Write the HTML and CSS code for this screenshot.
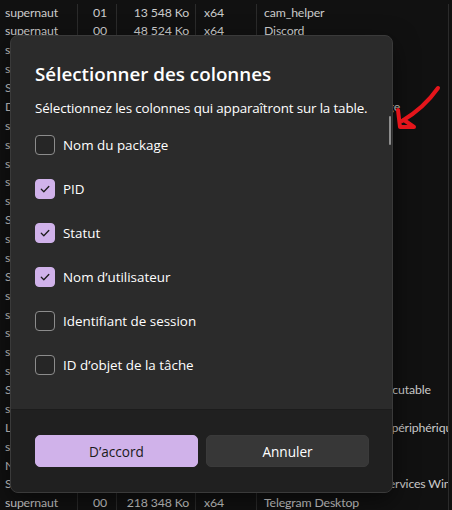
FILE: index.html
```html
<!DOCTYPE html>
<html lang="fr">

<head>
    <meta charset="UTF-8">
    <title>Gestionnaire des tâches</title>
    <link rel="stylesheet" href="styles.css">
</head>

<body>
    <div class="process-table">
        <div class="row"><span class="c-user">supernaut</span><span class="c-sess">01</span><span class="c-mem">13 548 Ko</span><span class="c-arch">x64</span><span class="c-desc">cam_helper</span><span class="c-end"></span></div>
        <div class="row"><span class="c-user">supernaut</span><span class="c-sess">00</span><span class="c-mem">48 524 Ko</span><span class="c-arch">x64</span><span class="c-desc">Discord</span><span class="c-end"></span></div>
        <div class="row"><span class="c-user">supernaut</span><span class="c-sess">01</span><span class="c-mem">2 104 Ko</span><span class="c-arch">x64</span><span class="c-desc">Discord</span><span class="c-end"></span></div>
        <div class="row"><span class="c-user">supernaut</span><span class="c-sess">01</span><span class="c-mem">9 880 Ko</span><span class="c-arch">x64</span><span class="c-desc">Discord</span><span class="c-end"></span></div>
        <div class="row"><span class="c-user">SYSTEM</span><span class="c-sess">00</span><span class="c-mem">1 420 Ko</span><span class="c-arch">x64</span><span class="c-desc">Processus hôte</span><span class="c-end"></span></div>
        <div class="row"><span class="c-user">DWM-1</span><span class="c-sess">01</span><span class="c-mem">72 316 Ko</span><span class="c-arch">x64</span><span class="c-desc">Gestionnaire de fenêtrage</span><span class="c-end"></span></div>
        <div class="row"><span class="c-user">supernaut</span><span class="c-sess">01</span><span class="c-mem">31 772 Ko</span><span class="c-arch">x64</span><span class="c-desc">Explorateur</span><span class="c-end"></span></div>
        <div class="row"><span class="c-user">supernaut</span><span class="c-sess">01</span><span class="c-mem">6 012 Ko</span><span class="c-arch">x64</span><span class="c-desc">Firefox</span><span class="c-end"></span></div>
        <div class="row"><span class="c-user">supernaut</span><span class="c-sess">01</span><span class="c-mem">8 264 Ko</span><span class="c-arch">x64</span><span class="c-desc">Firefox</span><span class="c-end"></span></div>
        <div class="row"><span class="c-user">supernaut</span><span class="c-sess">01</span><span class="c-mem">4 544 Ko</span><span class="c-arch">x64</span><span class="c-desc">Firefox</span><span class="c-end"></span></div>
        <div class="row"><span class="c-user">supernaut</span><span class="c-sess">01</span><span class="c-mem">3 176 Ko</span><span class="c-arch">x64</span><span class="c-desc">Firefox</span><span class="c-end"></span></div>
        <div class="row"><span class="c-user">SYSTEM</span><span class="c-sess">00</span><span class="c-mem">1 032 Ko</span><span class="c-arch">x64</span><span class="c-desc">Processus hôte</span><span class="c-end"></span></div>
        <div class="row"><span class="c-user">supernaut</span><span class="c-sess">01</span><span class="c-mem">12 440 Ko</span><span class="c-arch">x64</span><span class="c-desc">Firefox</span><span class="c-end"></span></div>
        <div class="row"><span class="c-user">supernaut</span><span class="c-sess">01</span><span class="c-mem">5 908 Ko</span><span class="c-arch">x64</span><span class="c-desc">Firefox</span><span class="c-end"></span></div>
        <div class="row"><span class="c-user">SYSTEM</span><span class="c-sess">00</span><span class="c-mem">2 760 Ko</span><span class="c-arch">x64</span><span class="c-desc">Processus hôte</span><span class="c-end"></span></div>
        <div class="row"><span class="c-user">supernaut</span><span class="c-sess">01</span><span class="c-mem">7 212 Ko</span><span class="c-arch">x64</span><span class="c-desc">Firefox</span><span class="c-end"></span></div>
        <div class="row"><span class="c-user">supernaut</span><span class="c-sess">01</span><span class="c-mem">2 884 Ko</span><span class="c-arch">x64</span><span class="c-desc">Firefox</span><span class="c-end"></span></div>
        <div class="row"><span class="c-user">supernaut</span><span class="c-sess">01</span><span class="c-mem">19 336 Ko</span><span class="c-arch">x64</span><span class="c-desc">Firefox</span><span class="c-end"></span></div>
        <div class="row"><span class="c-user">supernaut</span><span class="c-sess">01</span><span class="c-mem">1 656 Ko</span><span class="c-arch">x64</span><span class="c-desc">Firefox</span><span class="c-end"></span></div>
        <div class="row"><span class="c-user">supernaut</span><span class="c-sess">01</span><span class="c-mem">3 448 Ko</span><span class="c-arch">x64</span><span class="c-desc">Firefox</span><span class="c-end"></span></div>
        <div class="row"><span class="c-user">SYSTEM</span><span class="c-sess">00</span><span class="c-mem">6 196 Ko</span><span class="c-arch">x64</span><span class="c-desc">Service Antimalware exécutable</span><span class="c-end"></span></div>
        <div class="row"><span class="c-user">supernaut</span><span class="c-sess">01</span><span class="c-mem">2 028 Ko</span><span class="c-arch">x64</span><span class="c-desc">Firefox</span><span class="c-end"></span></div>
        <div class="row"><span class="c-user">LOCAL SERVICE</span><span class="c-sess">00</span><span class="c-mem">1 912 Ko</span><span class="c-arch">x64</span><span class="c-desc">Hôte de l’association de périphérique</span><span class="c-end"></span></div>
        <div class="row"><span class="c-user">supernaut</span><span class="c-sess">01</span><span class="c-mem">4 120 Ko</span><span class="c-arch">x64</span><span class="c-desc">Firefox</span><span class="c-end"></span></div>
        <div class="row"><span class="c-user">NETWORK SERVICE</span><span class="c-sess">00</span><span class="c-mem">3 064 Ko</span><span class="c-arch">x64</span><span class="c-desc">Hôte de service</span><span class="c-end"></span></div>
        <div class="row"><span class="c-user">SYSTEM</span><span class="c-sess">00</span><span class="c-mem">1 288 Ko</span><span class="c-arch">x64</span><span class="c-desc">Processus de l’hôte de services Windows</span><span class="c-end"></span></div>
        <div class="row"><span class="c-user">supernaut</span><span class="c-sess">00</span><span class="c-mem">218 348 Ko</span><span class="c-arch">x64</span><span class="c-desc">Telegram Desktop</span><span class="c-end"></span></div>
    </div>

    <div class="dialog">
        <div class="dialog-body">
            <h1 class="dialog-title">Sélectionner des colonnes</h1>
            <p class="dialog-text">Sélectionnez les colonnes qui apparaîtront sur la table.</p>
            <div class="column-list">
                <label class="check-row"><span class="box"></span>Nom du package</label>
                <label class="check-row"><span class="box checked"><svg viewBox="0 0 12 12" width="12" height="12"><path d="M2.3 6.3 L4.8 8.7 L9.8 3.5" /></svg></span>PID</label>
                <label class="check-row"><span class="box checked"><svg viewBox="0 0 12 12" width="12" height="12"><path d="M2.3 6.3 L4.8 8.7 L9.8 3.5" /></svg></span>Statut</label>
                <label class="check-row"><span class="box checked"><svg viewBox="0 0 12 12" width="12" height="12"><path d="M2.3 6.3 L4.8 8.7 L9.8 3.5" /></svg></span>Nom d’utilisateur</label>
                <label class="check-row"><span class="box"></span>Identifiant de session</label>
                <label class="check-row"><span class="box"></span>ID d’objet de la tâche</label>
            </div>
            <span class="scroll-thumb"></span>
        </div>
        <div class="dialog-footer">
            <button class="btn btn-primary">D’accord</button>
            <button class="btn">Annuler</button>
        </div>
    </div>

    <svg class="annotation" width="452" height="510" viewBox="0 0 452 510">
        <path d="M438 88 Q424 108 402 121" />
        <path d="M398 110 L400 127 L414 127 L404 120" />
    </svg>
</body>

</html>
```

FILE: styles.css
```css
html,
body {
    margin: 0;
    padding: 0;
    background-color: #111111;
    font-family: "Open Sans", "Noto Sans", sans-serif;
    color: #fff;
}

* {
    box-sizing: border-box;
}

/* BACKGROUND PROCESS TABLE */
.process-table {
    padding-top: 3.5px;
    font-family: "Lato", "Open Sans", sans-serif;
    font-size: 12.3px;
    letter-spacing: -0.15px;
    color: #cbcbcb;
    width: 452px;
    height: 510px;
    overflow: hidden;
}

.row {
    display: grid;
    grid-template-columns: 78px 39px 79px 61px 192px 3px;
    height: 18.88px;
    line-height: 18.88px;
    white-space: nowrap;
}

.row span {
    overflow: hidden;
    border-right: 1px solid #2b2b2b;
}

.c-user {
    padding-left: 5px;
}

.c-sess {
    text-align: right;
    padding-right: 9px;
}

.c-mem {
    text-align: right;
    padding-right: 6px;
}

.c-arch {
    padding-left: 8px;
}

.c-desc {
    padding-left: 7px;
}

.row .c-end {
    border-right: none;
}

/* DIALOG */
.dialog {
    position: absolute;
    left: 10px;
    top: 35px;
    width: 383px;
    height: 458px;
    display: flex;
    flex-direction: column;
    background-color: #2b2b2b;
    border: 1px solid #3a3a3a;
    border-radius: 8px;
    overflow: hidden;
    box-shadow: 0 8px 24px rgba(0, 0, 0, 0.5);
}

.dialog-body {
    position: relative;
    flex: 1;
    padding: 24px 24px 0 24px;
}

.dialog-title {
    margin: 0;
    font-size: 18.8px;
    font-weight: 600;
    line-height: 28px;
}

.dialog-text {
    margin: 10px 0 0 0;
    font-size: 13.4px;
    line-height: 20px;
    letter-spacing: -0.15px;
    white-space: nowrap;
}

.column-list {
    margin-top: 5px;
    height: 264px;
    overflow: hidden;
}

.check-row {
    display: flex;
    align-items: center;
    gap: 8px;
    height: 44px;
    font-size: 13.4px;
}

.box {
    display: flex;
    align-items: center;
    justify-content: center;
    width: 20px;
    height: 20px;
    border: 1px solid #8c8c8c;
    border-radius: 4px;
    background-color: #262626;
}

.box.checked {
    border-color: #d0b2ea;
    background-color: #d0b2ea;
}

.box svg path {
    fill: none;
    stroke: #1c1c1c;
    stroke-width: 1.3;
    stroke-linecap: round;
    stroke-linejoin: round;
}

.scroll-thumb {
    position: absolute;
    left: 378px;
    top: 80px;
    width: 2px;
    height: 29px;
    border-radius: 1px;
    background-color: #8e8e8e;
}

.dialog-footer {
    display: flex;
    gap: 8px;
    height: 83px;
    padding: 25px 23px 0 24px;
    background-color: #202020;
    border-top: 1px solid #1c1c1c;
}

.btn {
    width: 163px;
    height: 32px;
    border: 1px solid #3a3a3a;
    border-radius: 5px;
    background-color: #373737;
    color: #fff;
    font-family: "Open Sans", "Noto Sans", sans-serif;
    font-size: 13.6px;
}

.btn-primary {
    border-color: #d0b2ea;
    background-color: #d0b2ea;
    color: #1b1b1b;
}

/* RED HAND-DRAWN ARROW */
.annotation {
    position: absolute;
    left: 0;
    top: 0;
    pointer-events: none;
}

.annotation path {
    fill: none;
    stroke: #e5151b;
    stroke-width: 4;
    stroke-linecap: round;
    stroke-linejoin: round;
}
```
